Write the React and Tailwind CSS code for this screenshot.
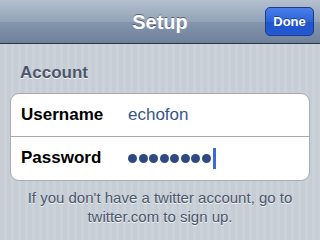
import React from "react";

const Row = ({ label, children, last }) => (
  <div
    className={`flex items-center h-[43px] ${last ? "" : "border-b border-[#a9abad]"}`}
  >
    <span className="w-[117px] pl-[10px] text-[17px] font-bold text-black">{label}</span>
    {children}
  </div>
);

export default function App() {
  return (
    <div
      className="w-[320px] h-[240px] overflow-hidden flex flex-col bg-[repeating-linear-gradient(90deg,#c6cdd5_0px,#c6cdd5_4px,#cbd2d9_4px,#cbd2d9_7px)]"
      style={{ fontFamily: "Helvetica, 'Liberation Sans', Arial, sans-serif" }}
    >
      <div className="relative h-[44px] shrink-0 flex items-center justify-center border-b border-[#2d3642] bg-[linear-gradient(180deg,#b4c0cf_0%,#93a3b8_50%,#8495ad_52%,#6e819b_100%)]">
        <span className="text-[20px] font-bold text-white [text-shadow:0_-1px_0_rgba(0,0,0,0.45)]">
          Setup
        </span>
        <button className="absolute right-[6px] top-[7px] h-[29px] w-[49px] rounded-[5px] border border-[#1d3c85] bg-[linear-gradient(180deg,#4a7ee8_0%,#2c63d8_50%,#1f55cc_52%,#2358d2_100%)] text-[13px] font-bold text-white [text-shadow:0_-1px_0_rgba(0,0,0,0.35)]">
          Done
        </button>
      </div>

      <div className="pt-[16px] pl-[20px] text-[17px] font-bold text-[#4c566c] [text-shadow:0_1px_0_rgba(255,255,255,0.8)]">
        Account
      </div>

      <div className="mx-[10px] mt-[7px] rounded-[9px] border border-[#a9abad] bg-white">
        <Row label="Username">
          <span className="text-[17px] text-[#385487]">echofon</span>
        </Row>
        <Row label="Password" last>
          <div className="flex items-center gap-[1.5px]">
            {Array.from({ length: 8 }).map((_, i) => (
              <span key={i} className="w-[9px] h-[9px] rounded-full bg-[#2f4a82]" />
            ))}
            <span className="ml-[1px] w-[3px] h-[21px] bg-[#3f68d8]" />
          </div>
        </Row>
      </div>

      <p className="mt-[7px] px-[16px] text-center text-[15px] leading-[19px] text-[#4c566c] [text-shadow:0_1px_0_rgba(255,255,255,0.8)]">
        If you don't have a twitter account, go to twitter.com to sign up.
      </p>
    </div>
  );
}
